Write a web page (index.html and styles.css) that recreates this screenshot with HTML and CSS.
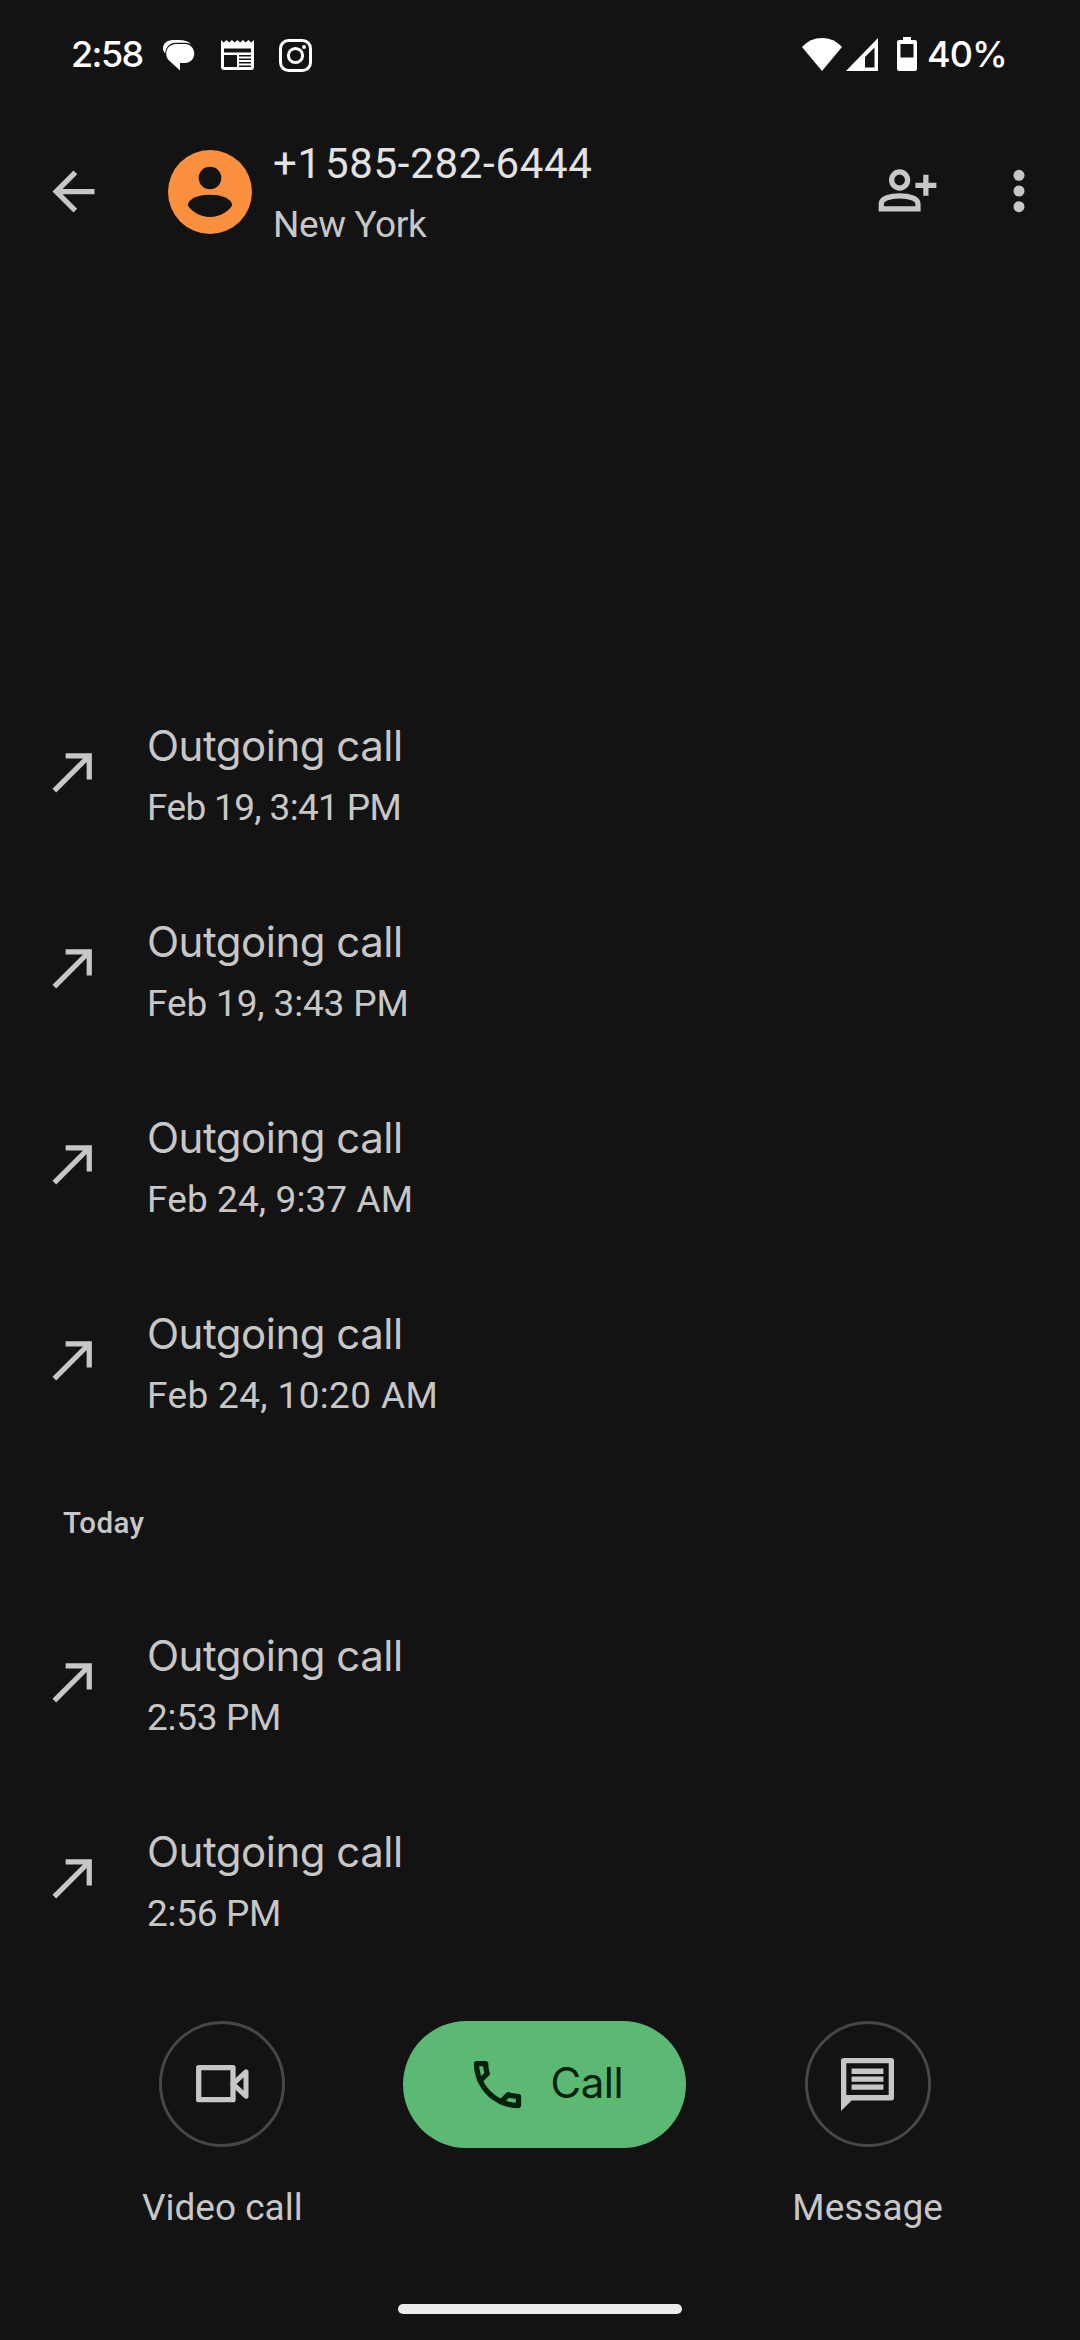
FILE: index.html
```
<!DOCTYPE html>
<html lang="en">
<head>
<meta charset="utf-8">
<title>Call history</title>
<link rel="stylesheet" href="styles.css">
</head>
<body>
<svg width="0" height="0" class="sprite">
  <symbol id="made" viewBox="0 0 24 24"><path d="M9 5v2h6.600L4 18.600 5.400 20 17 8.400V15h2V5z"/></symbol>
</svg>
<div class="screen">
  <div class="status">
    <span class="clock">2:58</span>
    <svg class="s-bubble" viewBox="0 0 32 32" width="32" height="32"><path fill="#fff" d="M10 0h6c5 0 9.500 1.400 12 4C26 3 23.500 2.700 21 2.700h-8C6.500 2.700 2.500 7.500 2.300 13.500 .8 11.800 0 10 0 8.500 0 3.500 4 0 10 0z"/><path fill="#fff" d="M13 4h9c5.500 0 9.300 4.500 9.300 9.500S27.500 23 22 23h-5v7.500L5.500 20C3.800 18.300 3.200 16 3.200 13.500 3.200 8 7.500 4 13 4z"/></svg>
    <svg class="s-news" viewBox="0 0 33 30" width="33" height="30"><path fill="#fff" fill-rule="evenodd" d="M0 0l2.700 2.600L5.400 0l2.800 2.600L10.900 0l2.800 2.600L16.400 0l2.800 2.600L21.900 0l2.800 2.600L27.400 0l2.800 2.600L33 0v27q0 3-3 3H3q-3 0-3-3zM3 8.500v4h27v-4zM3 15v12h13V15zM18 15v1.600h12V15zm0 3.500v1.600h12v-1.600zm0 3.500v1.600h12V22zm0 3.500v1.500h12v-1.500z"/></svg>
    <svg class="s-insta" viewBox="0 0 33 33" width="33" height="33"><g fill="none" stroke="#fff"><rect x="1.500" y="1.500" width="30" height="30" rx="8" stroke-width="3"/><circle cx="16.500" cy="16.500" r="7.100" stroke-width="3"/></g><circle cx="25" cy="8" r="2" fill="#fff"/></svg>
    <span class="fill"></span>
    <svg class="s-wifi" viewBox="0 0 40 33" width="40" height="33"><path fill="#fff" d="M0 9Q8 0 20 0t20 9L20 33z"/></svg>
    <svg class="s-cell" viewBox="0 0 32 33" width="32" height="33"><path fill="#fff" fill-rule="evenodd" d="M0 33L32 0v33zM28.500 9.500L19 19v10.500h9.500z"/></svg>
    <svg class="s-batt" viewBox="0 0 20 34" width="20" height="34"><path fill="#fff" fill-rule="evenodd" d="M6 0h8v3h4q2 0 2 2v27q0 2-2 2H2q-2 0-2-2V5q0-2 2-2h4zM3.500 7v13.500h13V7z"/></svg>
    <span class="pct">40%</span>
  </div>

  <header class="bar">
    <svg class="back" viewBox="0 0 24 24" width="63" height="63"><path fill="currentColor" d="M20 11H7.830l5.590-5.590L12 4l-8 8 8 8 1.410-1.410L7.830 13H20z"/></svg>
    <svg class="avatar" viewBox="0 0 84 84" width="84" height="84"><circle cx="42" cy="42" r="42" fill="#fa903e"/><circle cx="42" cy="28" r="11.300" fill="#131313"/><path fill="#131313" d="M19.700 55C21 48 31 44.800 42 44.800S63 48 64.300 55C62.500 59.500 53 67 42 67S21.500 59.500 19.700 55z"/></svg>
    <div class="who">
      <div class="number">+1 585-282-6444</div>
      <div class="place">New York</div>
    </div>
    <svg class="add" viewBox="0 0 24 24" width="63" height="63"><g fill="none" stroke="currentColor" stroke-width="2"><circle cx="9" cy="8" r="3.050"/><path d="M2 19v-1.900C2 15 5.500 14 9 14s7 1 7 3.100V19z"/><path d="M15 10h8M19 6v8"/></g></svg>
    <svg class="more" viewBox="0 0 12 44" width="12" height="44"><g fill="currentColor"><circle cx="6" cy="6.300" r="5.500"/><circle cx="6" cy="22" r="5.500"/><circle cx="6" cy="37.700" r="5.500"/></g></svg>
  </header>

  <main class="log">
    <div class="row"><svg class="arrow"><use href="#made"/></svg><div><div class="kind">Outgoing call</div><div class="when w1">Feb 19, 3:41 PM</div></div></div>
    <div class="row"><svg class="arrow"><use href="#made"/></svg><div><div class="kind">Outgoing call</div><div class="when">Feb 19, 3:43 PM</div></div></div>
    <div class="row"><svg class="arrow"><use href="#made"/></svg><div><div class="kind">Outgoing call</div><div class="when w2">Feb 24, 9:37 AM</div></div></div>
    <div class="row"><svg class="arrow"><use href="#made"/></svg><div><div class="kind">Outgoing call</div><div class="when w3">Feb 24, 10:20 AM</div></div></div>
    <h2 class="day">Today</h2>
    <div class="row"><svg class="arrow"><use href="#made"/></svg><div><div class="kind">Outgoing call</div><div class="when w4">2:53 PM</div></div></div>
    <div class="row"><svg class="arrow"><use href="#made"/></svg><div><div class="kind">Outgoing call</div><div class="when w4">2:56 PM</div></div></div>
  </main>

  <footer class="actions">
    <div class="action">
      <div class="ring"><svg viewBox="0 0 53 38" width="53" height="38"><g fill="none" stroke="currentColor" stroke-width="5.300" stroke-linejoin="round"><rect x="2.700" y="2.700" width="34.300" height="32"/><path d="M37 19L50 6.800v24.400z" stroke-width="5"/></g></svg></div>
      <div class="label">Video call</div>
    </div>
    <div class="call">
      <svg viewBox="0 0 24 24" width="63" height="63"><path fill="currentColor" d="M6.540 5c.06.890.210 1.760.450 2.590l-1.200 1.200c-.410-1.200-.670-2.470-.760-3.790h1.510m9.860 12.020c.850.240 1.720.390 2.600.450v1.490c-1.320-.090-2.590-.350-3.800-.750l1.200-1.190M7.500 3H4c-.550 0-1 .450-1 1 0 9.390 7.610 17 17 17 .550 0 1-.450 1-1v-3.490c0-.550-.450-1-1-1-1.240 0-2.450-.2-3.570-.570-.1-.040-.210-.050-.310-.050-.260 0-.510.1-.710.290l-2.200 2.200c-2.830-1.450-5.150-3.760-6.590-6.590l2.200-2.200c.280-.280.360-.670.250-1.020C8.700 6.450 8.500 5.250 8.500 4c0-.550-.450-1-1-1z"/></svg>
      <span class="call-text">Call</span>
    </div>
    <div class="action">
      <div class="ring"><svg viewBox="2 2 20 20" width="53" height="53"><path fill="none" stroke="currentColor" stroke-width="2" stroke-linejoin="round" d="M3 3h18v14H3z"/><path fill="currentColor" d="M2 16v6l4-4zM6 6h12v2H6zM6 9h12v2H6zM6 12h12v2H6z"/></svg></div>
      <div class="label">Message</div>
    </div>
  </footer>
  <div class="pill"></div>
</div>
</body>
</html>
```
FILE: styles.css
```
* { box-sizing: border-box; }
body { margin: 0; background: #131313; }
svg { display: block; flex: none; }
.sprite { position: absolute; }
.screen {
  width: 1080px; height: 2340px; overflow: hidden;
  display: flex; flex-direction: column;
  color: #c7c7c7; font-family: Roboto, sans-serif; white-space: nowrap;
}

.status {
  height: 108px; flex: none; padding: 0 75px 0 71px;
  display: flex; align-items: center;
  color: #fff; font: 500 36px/50px Inter, sans-serif;
}
.clock { width: 92px; letter-spacing: -1.6px; }
.s-bubble { margin-top: 3px; }
.s-news { margin: 2px 25px 0 26px; }
.s-insta { margin-top: 2px; }
.fill { flex: 1; }
.s-cell { margin-left: 4px; }
.s-batt { margin: 0 10px 0 19px; }
.pct { width: 78px; letter-spacing: -.9px; }

.bar { height: 567px; flex: none; padding: 22px 56px 0 42px; display: flex; align-items: flex-start; }
.back { margin-top: 30px; }
.avatar { margin: 20px 21px 0 63px; }
.who { flex: 1; padding-top: 1px; }
.number { color: #e3e3e3; font-size: 42px; line-height: 66px; letter-spacing: .7px; word-spacing: -8px; }
.place { font-size: 37px; line-height: 55px; letter-spacing: -.4px; }
.add { margin-top: 29px; }
.more { margin: 39px -1px 0 74px; }

.log { flex: none; }
.row { height: 196px; padding-left: 42px; display: flex; align-items: center; gap: 42px; }
.arrow { width: 63px; height: 63px; margin-bottom: 4px; fill: currentColor; }
.kind { font: 42px/68px Inter, sans-serif; letter-spacing: -.5px; }
.when { font-size: 37px; line-height: 55px; letter-spacing: -.15px; }
.w1 { letter-spacing: -.65px; }
.w2 { letter-spacing: .1px; }
.w3 { letter-spacing: .35px; }
.w4 { letter-spacing: -.3px; }
.day { margin: 0; height: 126px; padding: 2px 0 0 63px; font-size: 29.5px; font-weight: 500; line-height: 124px; letter-spacing: .4px; }

.actions {
  flex: none; height: 327px; padding: 44px 51px 0 61px;
  display: grid; grid-template-columns: repeat(3, 1fr); justify-items: center; align-items: start;
}
.action { display: flex; flex-direction: column; align-items: center; gap: 33px; }
.ring {
  width: 126px; height: 126px; border: 3px solid #474747; border-radius: 50%;
  display: flex; align-items: center; justify-content: center;
}
.label { font-size: 37px; line-height: 55px; }
.call {
  width: 283px; height: 127px; padding-left: 63px; border-radius: 64px;
  display: flex; align-items: center; gap: 21px;
  background: #5bb974; color: #04210c; font: 42px/60px Inter, sans-serif; letter-spacing: -.5px;
}
.call-text { margin-bottom: 3px; }
.pill { flex: none; align-self: flex-start; margin-left: 398px; width: 284px; height: 10px; border-radius: 5px; background: #ececec; }
```
